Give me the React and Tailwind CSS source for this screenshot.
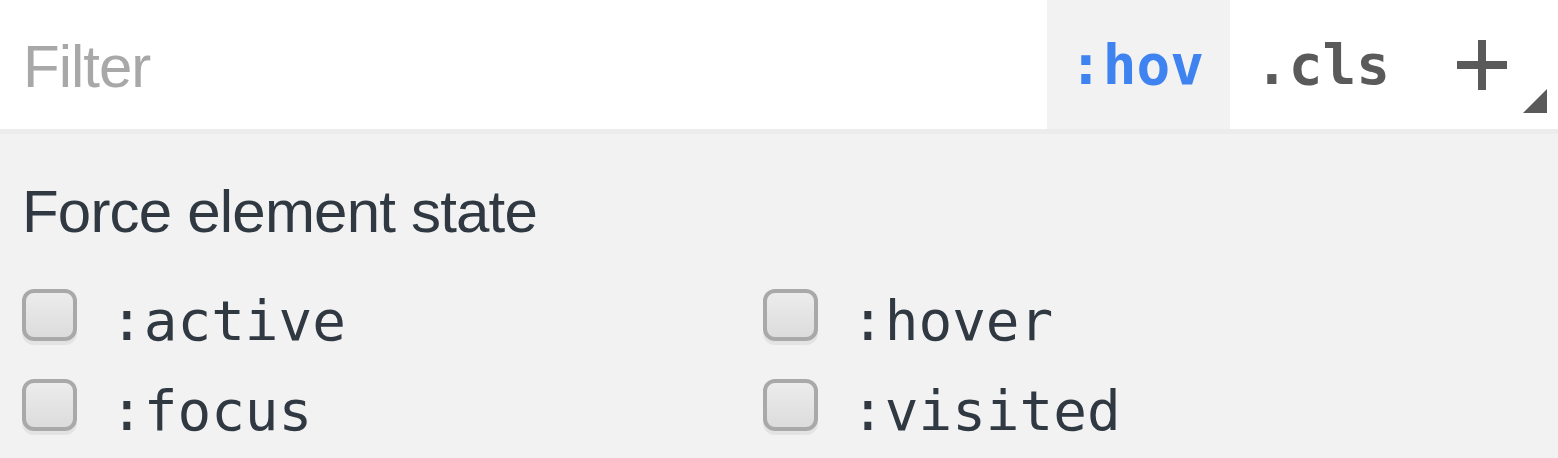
export default function App() {
  const states = [':active', ':hover', ':focus', ':visited'];

  return (
    <div className="w-[1558px] h-[458px] overflow-hidden bg-[#f2f2f2]">
      <div className="flex items-center h-[134px] bg-white border-b-[5px] border-[#ececec]">
        <input
          type="text"
          placeholder="Filter"
          className="flex-1 min-w-0 h-full pl-[23px] pt-[3px] bg-transparent outline-none text-[60px] leading-[60px] tracking-[-1px] text-[#303942] placeholder:text-[#a8a8a8] font-['Liberation_Sans',Arial,sans-serif]"
        />
        <div className="flex items-center h-full w-[183px] pl-[22px] bg-[#f2f2f2] font-['DejaVu_Sans_Mono',monospace] font-bold text-[56px] leading-[56px] text-[#3f83f0]">
          :hov
        </div>
        <div className="flex items-center h-full pl-[25px] w-[185px] font-['DejaVu_Sans_Mono',monospace] font-bold text-[56px] leading-[56px] text-[#5a5a5a]">
          .cls
        </div>
        <div className="relative flex items-center h-full w-[143px] pl-[42px]">
          <svg width="50" height="50" viewBox="0 0 50 50">
            <path d="M0 25H50M25 0V50" stroke="#5a5a5a" strokeWidth="8" fill="none" />
          </svg>
          <svg
            className="absolute right-[11px] bottom-[16px]"
            width="24"
            height="24"
            viewBox="0 0 24 24"
          >
            <polygon points="0,24 24,0 24,24" fill="#5a5a5a" />
          </svg>
        </div>
      </div>

      <div className="pl-[22px] pt-[48px]">
        <div className="text-[60px] leading-[60px] tracking-[-0.8px] text-[#303942] font-['Liberation_Sans',Arial,sans-serif]">
          Force element state
        </div>
        <div className="grid grid-cols-[741px_1fr] mt-[38px]">
          {states.map((s) => (
            <label key={s} className="flex items-start h-[90px]">
              <span className="mt-[9px] w-[55px] h-[52px] rounded-[12px] border-[4px] border-[#a9a9a9] bg-gradient-to-b from-[#ececec] to-[#dcdcdc] shadow-[0_4px_0_#e3e3e3]" />
              <span className="ml-[33px] mt-[13px] text-[56px] leading-[56px] text-[#303942] font-['DejaVu_Sans_Mono',monospace]">
                {s}
              </span>
            </label>
          ))}
        </div>
      </div>
    </div>
  );
}
